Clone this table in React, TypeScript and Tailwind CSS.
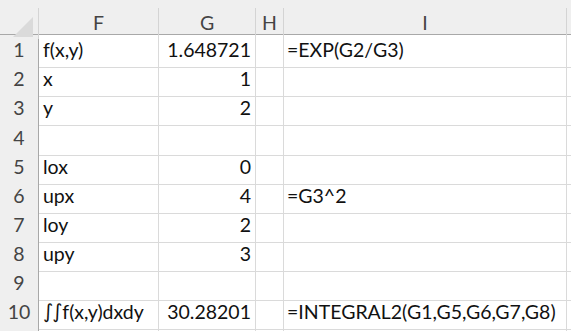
import { ReactElement } from "react";

const cols = ["F", "G", "H", "I"];

type Row = { n: number; f?: string; g?: string; i?: string; h?: string };

const rows: Row[] = [
  { n: 1, f: "f(x,y)", g: "1.648721", i: "=EXP(G2/G3)", h: "h-[29px]" },
  { n: 2, f: "x", g: "1", h: "h-[29px]" },
  { n: 3, f: "y", g: "2", h: "h-[30px]" },
  { n: 4, h: "h-[29px]" },
  { n: 5, f: "lox", g: "0", h: "h-[29px]" },
  { n: 6, f: "upx", g: "4", i: "=G3^2", h: "h-[29px]" },
  { n: 7, f: "loy", g: "2", h: "h-[29px]" },
  { n: 8, f: "upy", g: "3", h: "h-[29px]" },
  { n: 9, h: "h-[29px]" },
  { n: 10, f: "f(x,y)dxdy", g: "30.28201", i: "=INTEGRAL2(G1,G5,G6,G7,G8)", h: "h-[30px]" },
];

const grid = "grid grid-cols-[39px_120px_97px_28px_283px_1fr]";

export default function Sheet(): ReactElement {
  return (
    <div
      className="w-[571px] h-[331px] overflow-hidden bg-white text-[19.5px] text-[#111111]"
      style={{ fontFamily: "Lato, 'Liberation Sans', sans-serif" }}
    >
      <Header />
      {rows.map((r) => (
        <div key={r.n} className={`${grid} ${r.h}`}>
          <div className="bg-[#efefef] border-r border-r-[#a8a8a8] border-b border-b-[#d4d4d4] flex items-end justify-center pb-[3px] text-[#444444]">
            {r.n}
          </div>
          <div className="border-r border-b border-[#dadada] flex items-end pl-[4px] pb-[3px] whitespace-nowrap">
            {r.n === 10 && (
              <span className="tracking-[-1px] mr-[1px]" style={{ fontFamily: "'DejaVu Sans', sans-serif" }}>
                ∫∫
              </span>
            )}
            {r.f}
          </div>
          <div className="border-r border-b border-[#dadada] flex items-end justify-end pr-[4px] pb-[3px]">
            {r.g}
          </div>
          <div className="border-r border-b border-[#dadada]" />
          <div className="border-r border-b border-[#dadada] flex items-end pl-[3px] pb-[3px] whitespace-nowrap">
            {r.i}
          </div>
          <div className="border-b border-[#dadada]" />
        </div>
      ))}
      <div className={`${grid} h-[10px]`}>
        <div className="bg-[#efefef] border-r border-r-[#a8a8a8]" />
        <div className="border-r border-[#dadada]" />
        <div className="border-r border-[#dadada]" />
        <div className="border-r border-[#dadada]" />
        <div className="border-r border-[#dadada]" />
        <div />
      </div>
    </div>
  );
}

const Header = () => {
  return (
    <div className={`${grid} h-[35px] bg-[#efefef] border-b border-[#a8a8a8]`}>
      <div className="relative border-r border-[#d4d4d4] mt-[8px]">
        <div className="absolute right-[5px] bottom-[2px] w-0 h-0 border-l-[20px] border-l-transparent border-b-[20px] border-b-[#dadada]" />
      </div>
      {cols.map((c) => (
        <div
          key={c}
          className="mt-[8px] border-r border-[#d4d4d4] flex items-end justify-center pb-[2px] text-[#444444]"
        >
          {c}
        </div>
      ))}
      <div />
    </div>
  );
};
